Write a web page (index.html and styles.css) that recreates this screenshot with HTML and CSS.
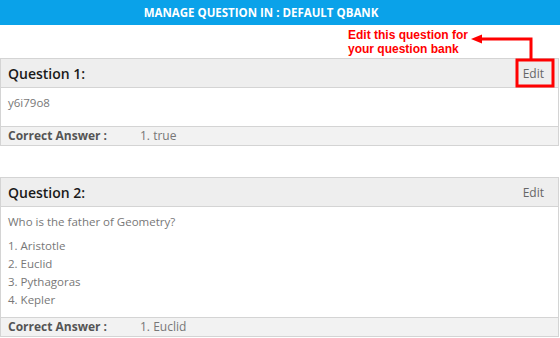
FILE: index.html
```html
<!DOCTYPE html>
<html lang="en">
<head>
    <meta charset="UTF-8">
    <meta name="viewport" content="width=device-width, initial-scale=1.0">
    <title>Manage Question</title>
    <link rel="stylesheet" href="styles.css">
</head>
<body>

    <div class="title-bar">MANAGE QUESTION IN : DEFAULT QBANK</div>

    <div class="page">
        <!-- help note over the first edit link -->
        <div class="hint">Edit this question for<br>your question bank</div>
        <svg class="hint-arrow" width="560" height="100" viewBox="0 0 560 100">
            <polyline points="480,39 531,39 531,60" fill="none" stroke="#ff0000" stroke-width="3"/>
            <polygon points="471,39 482,34.5 482,43.5" fill="#ff0000"/>
            <rect x="517" y="60" width="36" height="26" fill="none" stroke="#ff0000" stroke-width="3"/>
        </svg>

        <div class="question">
            <div class="question-head">
                <span class="question-title">Question 1:</span>
                <a href="#" class="edit-link">Edit</a>
            </div>
            <div class="question-body">
                <p>y6i79o8</p>
            </div>
            <div class="answer-row">
                <span class="answer-label">Correct Answer :</span>
                <span>1. true</span>
            </div>
        </div>

        <div class="question">
            <div class="question-head">
                <span class="question-title">Question 2:</span>
                <a href="#" class="edit-link">Edit</a>
            </div>
            <div class="question-body">
                <p>Who is the father of Geometry?</p>
                <ul class="options">
                    <li>1. Aristotle</li>
                    <li>2. Euclid</li>
                    <li>3. Pythagoras</li>
                    <li>4. Kepler</li>
                </ul>
            </div>
            <div class="answer-row">
                <span class="answer-label">Correct Answer :</span>
                <span>1. Euclid</span>
            </div>
        </div>
    </div>

</body>
</html>
```

FILE: styles.css
```css
body {
    font-family: "Open Sans", Arial, sans-serif;
    background-color: #fff;
    margin: 0;
    color: #333;
}
.title-bar {
    height: 25px;
    line-height: 25px;
    background: #0aa2e9;
    color: white;
    font-size: 11.5px;
    font-weight: bold;
    text-align: center;
    padding-right: 38px;
}
.page {
    position: relative;
    padding-top: 33px;
}
.hint {
    position: absolute;
    left: 348px;
    top: 3px;
    font-family: "Liberation Sans", Arial, sans-serif;
    font-size: 12px;
    font-weight: bold;
    line-height: 14px;
    color: #ff0000;
    z-index: 2;
}
.hint-arrow {
    position: absolute;
    left: 0;
    top: -25px;
    z-index: 2;
}
.question {
    border: 1px solid #d4d4d4;
    margin-right: 1px;
}
.question + .question {
    margin-top: 31px;
}
.question-head {
    height: 28px;
    background: #eeeeee;
    border-bottom: 1px solid #d4d4d4;
    display: flex;
    align-items: center;
    justify-content: space-between;
    padding: 0 14px 0 7px;
}
.question-title {
    font-size: 14px;
    font-weight: 600;
    color: #1a1a1a;
}
.edit-link {
    font-size: 12px;
    color: #666;
    text-decoration: none;
}
.question-body {
    padding: 6px 7px 8px;
    font-size: 11.5px;
    line-height: 18px;
    color: #777;
}
.question-body p {
    margin: 0 0 6px;
}
.options {
    list-style: none;
    margin: 2px 0 0;
    padding: 0;
}
.answer-row {
    height: 18px;
    line-height: 18px;
    background: #f2f2f2;
    border-top: 1px solid #d4d4d4;
    padding-left: 7px;
    font-size: 12px;
    color: #777;
    display: flex;
}
.answer-label {
    width: 132px;
    font-weight: bold;
    color: #555;
}
```
